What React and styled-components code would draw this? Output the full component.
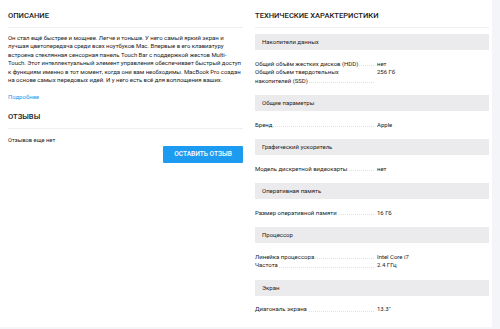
import React from "react";
import styled, { createGlobalStyle } from "styled-components";

const GlobalStyle = createGlobalStyle`
  html, body {
    margin: 0;
    padding: 0;
    background: #f4f5f9;
  }
  body {
    font-family: Roboto, "Liberation Sans", sans-serif;
    color: #222;
  }
`;

const Card = styled.div`
  width: 492px;
  height: 327px;
  box-sizing: border-box;
  padding: 0 3px 0 8px;
  background: #fff;
  display: grid;
  grid-template-columns: 235px 234px;
  column-gap: 12px;
  align-items: start;
  overflow: hidden;
`;

const Column = styled.section`
  display: flex;
  flex-direction: column;
`;

const Title = styled.h2`
  margin: 0;
  padding: 11px 0 6px;
  line-height: 10px;
  font-size: 7.6px;
  font-weight: 500;
  text-transform: uppercase;
  color: #1b1b1b;
  border-bottom: 1px solid #efeff2;
`;

const Text = styled.p`
  margin: 5.5px 0 0;
  width: 236px;
  font-size: 6px;
  letter-spacing: -0.04px;
  line-height: 8.5px;
  color: #222;
`;

const MoreLink = styled.a`
  margin-top: 8px;
  font-size: 6px;
  line-height: 8.5px;
  color: #1e96ee;
  text-decoration: none;
`;

const Empty = styled.div`
  margin-top: 6.5px;
  font-size: 5.8px;
  line-height: 8px;
`;

const Actions = styled.div`
  display: flex;
  justify-content: flex-end;
  margin-top: 2.7px;
`;

const Button = styled.button`
  width: 80px;
  height: 16.6px;
  padding: 0;
  border: 0;
  border-radius: 1px;
  background: #1d9bf0;
  color: #fff;
  font-family: Roboto, "Liberation Sans", sans-serif;
  font-size: 6.6px;
  font-weight: 500;
  text-transform: uppercase;
`;

const Specs = styled.div`
  margin-top: 6px;
`;

const GroupHeader = styled.div`
  height: 16px;
  line-height: 16px;
  padding-left: 7px;
  background: #ebebee;
  font-size: 6px;
  color: #222;
`;

const Rows = styled.div`
  padding: 9.5px 0 10px;
`;

const Row = styled.div`
  display: flex;
  gap: 3px;
  font-size: 6px;
  line-height: 8.5px;
`;

const Label = styled.div`
  flex: 0 0 119px;
  box-sizing: border-box;
  padding-right: 10px;
  background-image: linear-gradient(to right, #e0e0e4 50%, transparent 50%);
  background-size: 2px 0.6px;
  background-repeat: repeat-x;
  background-position: 0 calc(100% - 2px);
`;

const LabelText = styled.span`
  background: #fff;
  padding-right: 1px;
`;

const Value = styled.div`
  flex: 1;
`;

const specs = [
  {
    title: "Накопители данных",
    rows: [
      ["Общий объём жестких дисков (HDD)", "нет"],
      ["Общий объем твердотельных накопителей (SSD)", "256 Гб"],
    ],
  },
  { title: "Общие параметры", rows: [["Бренд", "Apple"]] },
  { title: "Графический ускоритель", rows: [["Модель дискретной видеокарты", "нет"]] },
  { title: "Оперативная память", rows: [["Размер оперативной памяти", "16 Гб"]] },
  {
    title: "Процессор",
    rows: [
      ["Линейка процессора", "Intel Core i7"],
      ["Частота", "2.4 ГГц"],
    ],
  },
  { title: "Экран", rows: [["Диагональ экрана", "13.3\""]] },
];

const App = () => {
  return (
    <>
      <GlobalStyle />
      <Card>
        <Column>
          <Title>Описание</Title>
          <Text>
            Он стал ещё быстрее и мощнее. Легче и тоньше. У него самый яркий экран и
            лучшая цветопередача среди всех ноутбуков Mac. Впервые в его клавиатуру
            встроена стеклянная сенсорная панель Touch Bar с поддержкой жестов
            Multi-Touch. Этот интеллектуальный элемент управления обеспечивает быстрый
            доступ к функциям именно в тот момент, когда они вам необходимы. MacBook Pro
            создан на основе самых передовых идей. И у него есть всё для воплощения
            ваших.
          </Text>
          <MoreLink href="#">Подробнее</MoreLink>
          <Title>Отзывы</Title>
          <Empty>Отзывов еще нет</Empty>
          <Actions>
            <Button>Оставить отзыв</Button>
          </Actions>
        </Column>
        <Column>
          <Title>Технические характеристики</Title>
          <Specs>
            {specs.map((group) => (
              <div key={group.title}>
                <GroupHeader>{group.title}</GroupHeader>
                <Rows>
                  {group.rows.map(([label, value]) => (
                    <Row key={label}>
                      <Label>
                        <LabelText>{label}</LabelText>
                      </Label>
                      <Value>{value}</Value>
                    </Row>
                  ))}
                </Rows>
              </div>
            ))}
          </Specs>
        </Column>
      </Card>
    </>
  );
};

export default App;
